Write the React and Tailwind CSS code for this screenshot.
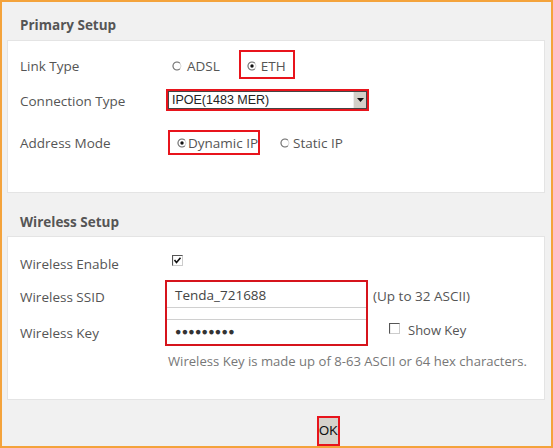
import React from 'react';

const Radio = ({ checked }) => (
  <svg width="10" height="10" viewBox="0 0 10 10" className="shrink-0">
    <circle cx="5" cy="5" r="4" fill="#fff" stroke="#d8d8d8" strokeWidth="1" />
    <path d="M7.8 2.2 A4 4 0 1 0 7.8 7.8" fill="none" stroke="#777" strokeWidth="1.1" />
    {checked && <circle cx="5" cy="5" r="1.7" fill="#111" />}
  </svg>
);

const Checkbox = ({ checked }) => (
  <svg width="11" height="11" viewBox="0 0 11 11" className="shrink-0">
    <rect x="0.5" y="0.5" width="10" height="10" fill="#fff" stroke="#ccc" />
    <path d="M0.5 10.5 V0.5 H10.5" fill="none" stroke="#555" strokeWidth="1.2" />
    {checked && <path d="M2.5 5 L4.5 7.5 L8.5 2.8" fill="none" stroke="#111" strokeWidth="1.6" />}
  </svg>
);

const SectionTitle = ({ children, className }) => (
  <div className={`pl-[18px] font-bold text-[13.5px] leading-[18px] text-[#555] ${className}`}>{children}</div>
);

const Label = ({ children, className = 'pt-[3px]' }) => (
  <div className={`w-[158px] shrink-0 pl-[12px] text-[13.5px] text-[#555] whitespace-nowrap ${className}`}>{children}</div>
);

export default function App() {
  return (
    <div
      className="w-[553px] h-[448px] border-2 border-[#f4a33c] bg-[#f1f1f1] flex flex-col overflow-hidden"
      style={{ fontFamily: '"Open Sans", "Noto Sans", sans-serif' }}
    >
      <SectionTitle className="h-[38px] pt-[14px]">Primary Setup</SectionTitle>

      <div className="ml-[5px] mr-[6px] h-[153px] bg-white border border-[#e4e4e4]">
        {/* Link Type */}
        <div className="mt-[9px] h-[29px] flex items-center">
          <Label>Link Type</Label>
          <div className="ml-[6px] pt-[3px] flex items-center gap-[5px] text-[13.5px] text-[#555] whitespace-nowrap">
            <Radio />
            <span>ADSL</span>
          </div>
          <div className="ml-[19px] h-[29px] w-[56px] pl-[6px] pt-[3px] flex items-center gap-[4px] border-2 border-[#e8141c] text-[13.5px] text-[#555] whitespace-nowrap">
            <Radio checked />
            <span>ETH</span>
          </div>
        </div>

        {/* Connection Type */}
        <div className="mt-[10px] h-[22px] flex items-center">
          <Label>Connection Type</Label>
          <div className="w-[203px] h-[22px] border-2 border-[#e8141c] flex">
            <div className="flex-1 flex items-center justify-between border border-[#444] bg-white">
              <span className="pl-[3px] text-[12.5px] text-[#222]" style={{ fontFamily: '"Liberation Sans", Arial, sans-serif' }}>
                IPOE(1483 MER)
              </span>
              <div className="w-[13px] h-full bg-[#d4d0c8] flex items-center justify-center border-l border-[#eee]">
                <svg width="7" height="4" viewBox="0 0 7 4">
                  <path d="M0 0 H7 L3.5 4 Z" fill="#111" />
                </svg>
              </div>
            </div>
          </div>
        </div>

        {/* Address Mode */}
        <div className="mt-[19px] h-[25px] flex items-center">
          <Label className="pt-[1px]">Address Mode</Label>
          <div className="ml-[2px] h-[25px] w-[92px] pl-[7px] pt-[1px] flex items-center gap-[1px] border-2 border-[#e8141c] text-[13.5px] text-[#555] whitespace-nowrap">
            <Radio checked />
            <span>Dynamic IP</span>
          </div>
          <div className="ml-[20px] pt-[1px] flex items-center gap-[3px] text-[13.5px] text-[#555] whitespace-nowrap">
            <Radio />
            <span>Static IP</span>
          </div>
        </div>
      </div>

      <SectionTitle className="h-[43px] pt-[20px]">Wireless Setup</SectionTitle>

      <div className="ml-[5px] mr-[6px] h-[164px] bg-white border border-[#e4e4e4]">
        {/* Wireless Enable */}
        <div className="mt-[14px] h-[24px] flex items-center">
          <Label>Wireless Enable</Label>
          <div className="ml-[6px] -mt-[6px]">
            <Checkbox checked />
          </div>
        </div>

        <div className="mt-[5px] flex">
          <div className="w-[157px] shrink-0 text-[13.5px] text-[#555] pl-[12px] whitespace-nowrap">
            <div className="h-[32px] pt-[8px] leading-[18px]">Wireless SSID</div>
            <div className="h-[32px] pt-[12px] leading-[18px]">Wireless Key</div>
          </div>
          <div className="flex flex-col">
            <div className="flex">
              <div className="w-[203px] h-[66px] border-2 border-[#d6141c] flex flex-col">
                <div className="h-[26px] border-b border-[#d0d0d0] pl-[8px] pt-[2px] flex items-center text-[13.5px] text-[#444]">
                  Tenda_721688
                </div>
                <div className="h-[11px]" />
                <div className="flex-1 border-t border-[#d0d0d0] pl-[8px] flex items-center text-[10.5px] tracking-[0.3px] text-[#333]">
                  ●●●●●●●●●
                </div>
              </div>
              <div className="flex flex-col text-[13.5px] text-[#555] whitespace-nowrap">
                <div className="h-[30px] pl-[5px] pt-[2px] flex items-center">(Up to 32 ASCII)</div>
                <div className="mt-[11px] pl-[21px] flex items-center gap-[8px]">
                  <div className="-mt-[4px]">
                    <Checkbox />
                  </div>
                  <span className="text-[13px]">Show Key</span>
                </div>
              </div>
            </div>
            <div className="mt-[6px] pl-[3px] text-[13.1px] leading-[18px] text-[#777] whitespace-nowrap">
              Wireless Key is made up of 8-63 ASCII or 64 hex characters.
            </div>
          </div>
        </div>
      </div>

      <div className="pt-[16px] pl-[315px]">
        <button
          className="w-[23px] h-[30px] border-2 border-[#e8141c] bg-[#d6d2cb] text-[13px] text-[#111] flex items-center justify-center"
          style={{ fontFamily: '"Liberation Sans", Arial, sans-serif' }}
        >
          OK
        </button>
      </div>
    </div>
  );
}
